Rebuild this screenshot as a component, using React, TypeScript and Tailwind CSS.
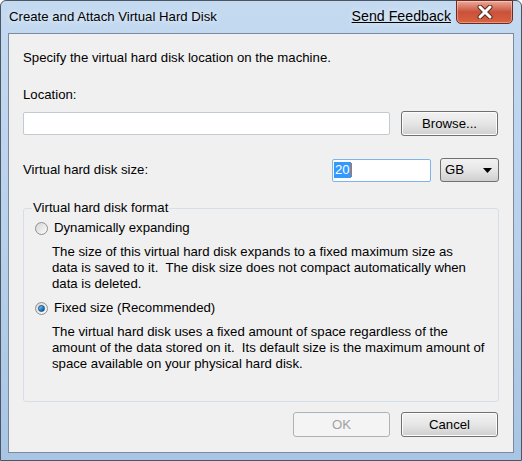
import React from 'react';

// Win7 aero-style dialog: "Create and Attach Virtual Hard Disk"
const FONT = { fontFamily: '"Liberation Sans", Arial, sans-serif' };

function CloseButton() {
  return (
    <div className="ml-[5px] mr-[1px] mt-[-1px] flex h-[24px] w-[57px] items-center justify-center self-start rounded-b-[5px] border border-[#6d2a20] bg-gradient-to-b from-[#e9a99a] via-[#c9513a] to-[#d9633f] shadow-[inset_0_0_0_1px_rgba(255,255,255,0.35)]">
      <svg width="18" height="14" viewBox="0 0 18 14">
        <path d="M4 2 L14 12 M14 2 L4 12" stroke="#5a2a22" strokeWidth="5" strokeLinecap="round" />
        <path d="M4 2 L14 12 M14 2 L4 12" stroke="#ffffff" strokeWidth="3" strokeLinecap="round" />
      </svg>
    </div>
  );
}

function Radio({ checked }: { checked?: boolean }) {
  return (
    <span className="flex h-[13px] w-[13px] shrink-0 items-center justify-center rounded-full border border-[#8f8f8f] bg-gradient-to-br from-[#d6d6d6] to-[#fbfbfb]">
      {checked && (
        <span className="h-[7px] w-[7px] rounded-full border border-[#0f4d80] bg-gradient-to-br from-[#9ad4ff] via-[#2f8ad8] to-[#0c4f8a]" />
      )}
    </span>
  );
}

function Button({ label, disabled }: { label: string; disabled?: boolean }) {
  return (
    <div
      className={
        disabled
          ? 'flex h-[25px] w-[97px] items-center justify-center rounded-[3px] border border-[#adb2b5] bg-[#f4f4f4] text-[#a0a0a0]'
          : 'flex h-[25px] w-[97px] items-center justify-center rounded-[3px] border border-[#707070] bg-gradient-to-b from-[#f2f2f2] via-[#e6e6e6] to-[#cfcfcf] text-black shadow-[inset_0_0_0_1px_#fcfcfc]'
      }
    >
      {label}
    </div>
  );
}

export default function App() {
  return (
    <div className="h-[461px] w-[522px] bg-white" style={FONT}>
      <div className="flex h-full w-full flex-col rounded-t-[6px] border border-[#4b5664] bg-gradient-to-b from-[#c4daf1] via-[#b8d1ec] to-[#a8c5e4] px-[7px] pb-[7px]">
        {/* title bar */}
        <div className="flex h-[32px] items-center pl-[1px]">
          <span className="text-[13.2px] text-black [text-shadow:0_0_6px_#ffffff]">Create and Attach Virtual Hard Disk</span>
          <span className="ml-auto text-[14.2px] text-black underline [text-shadow:0_0_6px_#ffffff]">Send Feedback</span>
          <CloseButton />
        </div>

        {/* client area */}
        <div className="flex flex-1 flex-col border border-[#7d8a9b] bg-[#f0f0f0] px-[14px] text-[13.2px] leading-[16px] text-black">
          <div className="mt-[16px]">Specify the virtual hard disk location on the machine.</div>
          <div className="mt-[21px]">Location:</div>

          <div className="mt-[8px] flex h-[25px] items-center">
            <div className="h-[23px] w-[367px] rounded-[2px] border border-[#c4cad2] bg-white" />
            <div className="ml-auto mr-[1px]">
              <Button label="Browse..." />
            </div>
          </div>

          <div className="mt-[22px] flex h-[24px] items-center">
            <span>Virtual hard disk size:</span>
            <div className="ml-auto flex h-[23px] w-[99px] items-center rounded-[2px] border border-[#7eb4ea] bg-white pl-[1px]">
              <span className="bg-[#3399ff] px-[1px] text-white">20</span>
              <span className="h-[14px] w-[1px] bg-[#d86a1a]" />
            </div>
            <div className="ml-[9px] flex h-[24px] w-[59px] items-center rounded-[3px] border border-[#707070] bg-gradient-to-b from-[#f2f2f2] via-[#e6e6e6] to-[#cfcfcf] pl-[4px] pr-[6px]">
              <span>GB</span>
              <svg className="ml-auto" width="9" height="5" viewBox="0 0 9 5">
                <path d="M0 0 H9 L4.5 5 Z" fill="#000" />
              </svg>
            </div>
          </div>

          <fieldset className="mt-[18px] rounded-[3px] border border-[#d5dfe5] pb-[29px] pl-[11px] pr-[10px]">
            <legend className="ml-[-3px] px-[1px]">Virtual hard disk format</legend>
            <div className="mt-[4px] flex items-center gap-[6px]">
              <Radio />
              <span>Dynamically expanding</span>
            </div>
            <div className="mt-[8px] pl-[17px]">
              The size of this virtual hard disk expands to a fixed maximum size as
              <br />
              data is saved to it.&nbsp; The disk size does not compact automatically when
              <br />
              data is deleted.
            </div>
            <div className="mt-[8px] flex items-center gap-[6px]">
              <Radio checked />
              <span>Fixed size (Recommended)</span>
            </div>
            <div className="mt-[8px] pl-[17px]">
              The virtual hard disk uses a fixed amount of space regardless of the
              <br />
              amount of the data stored on it.&nbsp; Its default size is the maximum amount of
              <br />
              space available on your physical hard disk.
            </div>
          </fieldset>

          <div className="mt-[10px] mr-[1px] flex justify-end gap-[11px]">
            <Button label="OK" disabled />
            <Button label="Cancel" />
          </div>
        </div>
      </div>
    </div>
  );
}
